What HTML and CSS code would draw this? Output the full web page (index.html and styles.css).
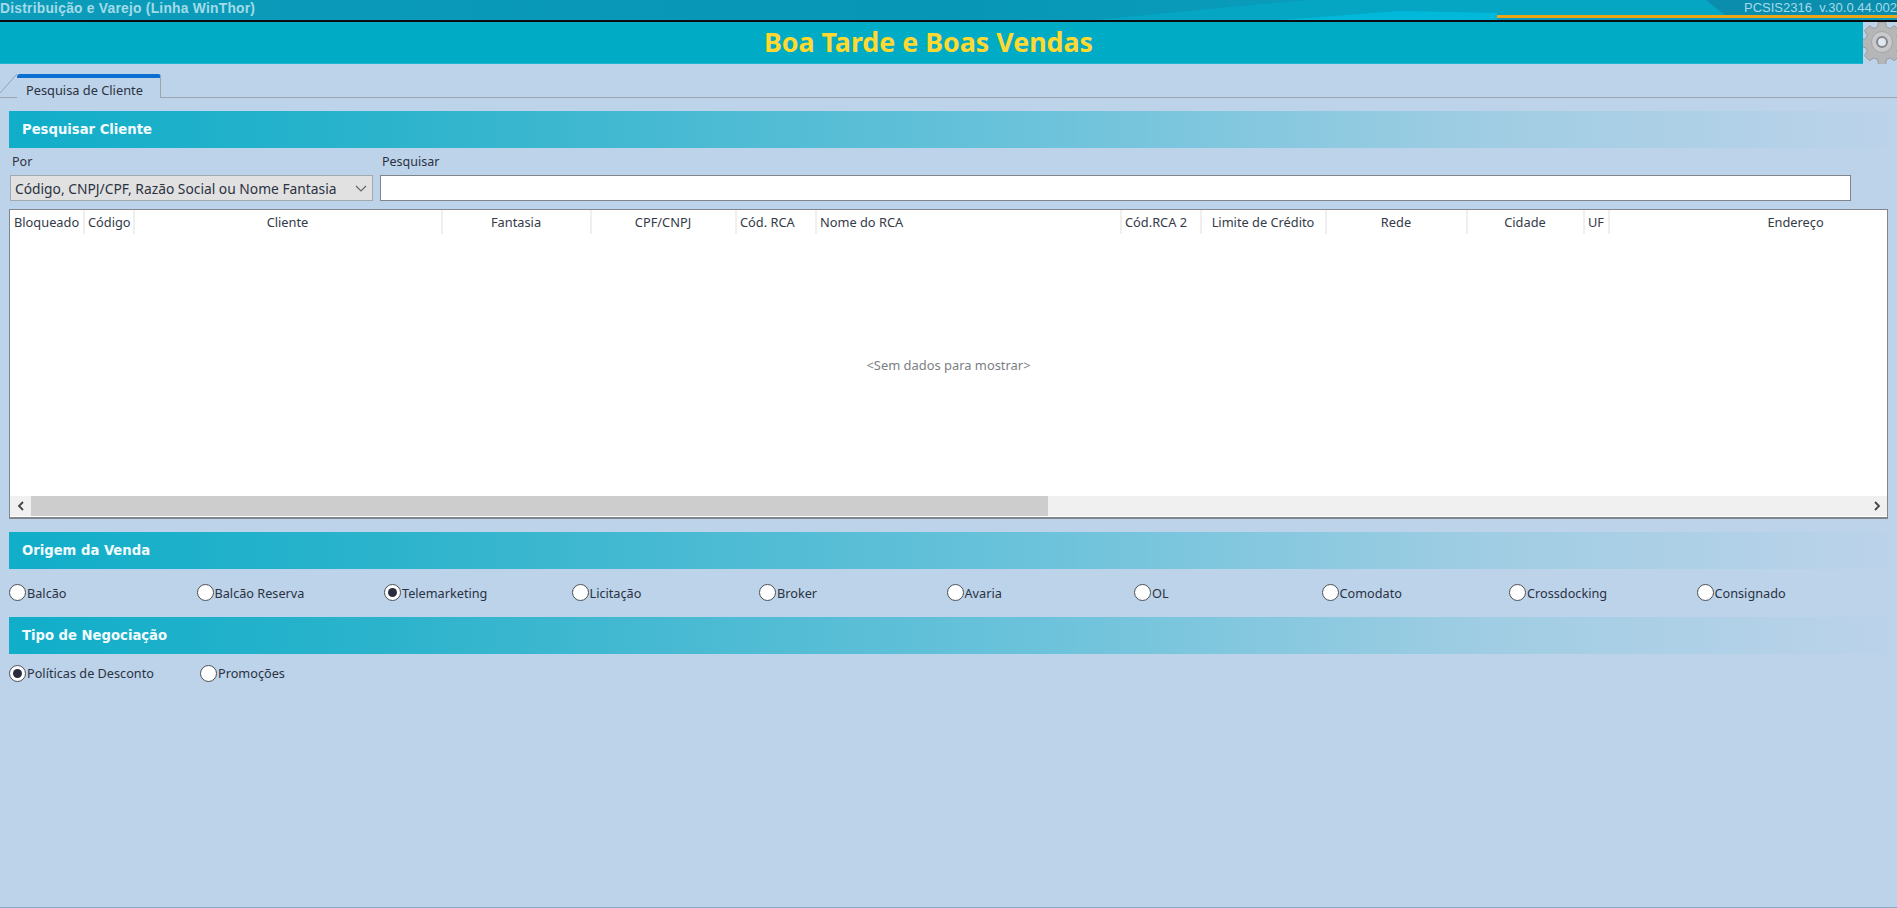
FILE: index.html
```html
<!DOCTYPE html>
<html lang="pt">
<head>
    <meta charset="UTF-8">
    <meta name="viewport" content="width=device-width, initial-scale=1.0">
    <title>PCSIS2316 - Pesquisa de Cliente</title>
    <link rel="stylesheet" href="styles.css">
</head>
<body>
    <header class="topbar">
        <svg class="topbar-art" viewBox="0 0 1897 20" preserveAspectRatio="none" aria-hidden="true">
            <polygon points="1095,20 1240,6 1310,0 1720,0 1760,15 1497,15 1497,20" fill="#04a6c4"/>
            <polygon points="1280,20 1400,11 1497,13 1497,20" fill="#00b9da"/>
            <polygon points="1706,0 1897,0 1897,15 1725,15" fill="#0b8dad"/>
            <rect x="1497" y="15" width="400" height="3" fill="#eca516"/>
        </svg>
        <span class="app-name">Distribuição e Varejo (Linha WinThor)</span>
        <span class="app-version">PCSIS2316&nbsp; v.30.0.44.002</span>
    </header>
    <div class="greeting">
        <h1>Boa Tarde e Boas Vendas</h1>
        <div class="gear">
            <svg width="40" height="42" viewBox="0 0 40 42" aria-hidden="true">
                <path d="M15.500 0h7l1 5 3.500 1.500 4.500-2.800 5 5-2.800 4.500 1.500 3.500 5 1v7l-5 1-1.500 3.500 2.800 4.500-5 5-4.500-2.800-3.500 1.500-1 5h-7l-1-5-3.500-1.500-4.500 2.800-5-5 2.800-4.500-1.500-3.500-5-1v-7l5-1 1.500-3.500-2.800-4.500 5-5 4.500 2.800 3.500-1.500z" fill="#b4b6b8" stroke="#9a9c9e" stroke-width="1"/>
                <circle cx="19" cy="20" r="10.500" fill="#c9cacb" stroke="#a3a5a7" stroke-width="1"/>
                <circle cx="19" cy="20" r="5" fill="#dfe8f2" stroke="#85878a" stroke-width="2"/>
            </svg>
        </div>
    </div>

    <nav class="tabs">
        <svg class="tab-slant" width="18" height="25" viewBox="0 0 18 25" aria-hidden="true">
            <path d="M0 20 L17 1" fill="none" stroke="#9aa3ad" stroke-width="1"/>
        </svg>
        <div class="tab">Pesquisa de Cliente</div>
    </nav>

    <main class="content">
        <h2 class="section-title">Pesquisar Cliente</h2>
        <div class="search-row">
            <div class="field field-by">
                <label>Por</label>
                <div class="combo">
                    <span>Código, CNPJ/CPF, Razão Social ou Nome Fantasia</span>
                    <svg width="12" height="7" viewBox="0 0 12 7" aria-hidden="true">
                        <path d="M1 1 L6 6 L11 1" fill="none" stroke="#666" stroke-width="1.200"/>
                    </svg>
                </div>
            </div>
            <div class="field field-query">
                <label>Pesquisar</label>
                <input type="text" class="query">
            </div>
        </div>

        <section class="grid">
            <div class="grid-head">
                <div class="col col-left">Bloqueado</div>
                <div class="col col-left">Código</div>
                <div class="col">Cliente</div>
                <div class="col">Fantasia</div>
                <div class="col">CPF/CNPJ</div>
                <div class="col col-left">Cód. RCA</div>
                <div class="col col-left">Nome do RCA</div>
                <div class="col col-left">Cód.RCA 2</div>
                <div class="col">Limite de Crédito</div>
                <div class="col">Rede</div>
                <div class="col">Cidade</div>
                <div class="col col-left">UF</div>
                <div class="col">Endereço</div>
            </div>
            <div class="grid-body">&lt;Sem dados para mostrar&gt;</div>
            <div class="hscroll">
                <div class="hscroll-btn">
                    <svg width="8" height="10" viewBox="0 0 8 10" aria-hidden="true"><path d="M6 1 L2 5 L6 9" fill="none" stroke="#444" stroke-width="1.800"/></svg>
                </div>
                <div class="hscroll-track"><div class="hscroll-thumb"></div></div>
                <div class="hscroll-btn">
                    <svg width="8" height="10" viewBox="0 0 8 10" aria-hidden="true"><path d="M2 1 L6 5 L2 9" fill="none" stroke="#444" stroke-width="1.800"/></svg>
                </div>
            </div>
        </section>

        <h2 class="section-title section-origin">Origem da Venda</h2>
        <div class="radios radios-origin">
            <div class="radio"><i></i>Balcão</div>
            <div class="radio"><i></i>Balcão Reserva</div>
            <div class="radio on"><i></i>Telemarketing</div>
            <div class="radio"><i></i>Licitação</div>
            <div class="radio"><i></i>Broker</div>
            <div class="radio"><i></i>Avaria</div>
            <div class="radio"><i></i>OL</div>
            <div class="radio"><i></i>Comodato</div>
            <div class="radio"><i></i>Crossdocking</div>
            <div class="radio"><i></i>Consignado</div>
        </div>

        <h2 class="section-title">Tipo de Negociação</h2>
        <div class="radios radios-deal">
            <div class="radio on"><i></i>Políticas de Desconto</div>
            <div class="radio"><i></i>Promoções</div>
        </div>
    </main>
</body>
</html>
```

FILE: styles.css
```css
html, body {
    height: 100%;
}
body {
    margin: 0;
    height: 908px;
    box-sizing: border-box;
    overflow: hidden;
    background: #bcd3ea;
    border-bottom: 1px solid #8fa8c8;
    font-family: "Noto Sans", Tahoma, sans-serif;
    font-size: 12.5px;
    color: #2b3242;
}

/* top strip */
.topbar {
    position: relative;
    height: 20px;
    display: flex;
    justify-content: space-between;
    align-items: center;
    overflow: hidden;
    white-space: nowrap;
    background: linear-gradient(90deg, #0c9cba 0%, #0796b6 50%, #0a9cbc 70%, #0b9cbc 100%);
    border-bottom: 2px solid #0c0c10;
    font-family: "Liberation Sans", Arial, sans-serif;
    color: #a3dbe8;
}
.topbar-art {
    position: absolute;
    left: 0;
    top: 0;
    width: 1897px;
    height: 20px;
}
.app-name {
    position: relative;
    font-weight: bold;
    font-size: 13.8px;
    letter-spacing: 0.25px;
    margin-top: -4px;
}
.app-version {
    position: relative;
    font-size: 13px;
    margin-top: -6px;
}

/* greeting */
.greeting {
    display: flex;
    height: 42px;
}
.greeting h1 {
    flex: 1;
    margin: 0;
    padding-right: 6px;
    background: #00abc6;
    border-bottom: 1px solid #20b5cf;
    text-align: center;
    font-size: 26.800px;
    line-height: 40px;
    font-weight: bold;
    color: #ffd92f;
}
.gear {
    width: 34px;
    overflow: hidden;
}

/* tabs */
.tabs {
    display: flex;
    align-items: flex-end;
    height: 34px;
    box-sizing: border-box;
    border-bottom: 1px solid #9ca4ae;
}
.tab-slant {
    display: block;
    margin-bottom: -1px;
    margin-right: -1px;
}
.tab {
    width: 144px;
    height: 24px;
    box-sizing: border-box;
    margin-bottom: -1px;
    padding: 4px 0 0 9px;
    border-top: 4px solid #0a6fd0;
    border-right: 1px solid #9ca4ae;
    border-radius: 3px 3px 0 0;
    background: #bcd3ea;
    font-size: 12.800px;
    line-height: 17px;
}

/* content */
.content {
    padding: 13px 0 0 9px;
}
.section-title {
    height: 37px;
    margin: 0;
    padding-left: 13px;
    background: linear-gradient(90deg, #10aec9 0%, #2cb3cc 20%, #6cc3db 55%, #9fcde3 78%, #bcd3ea 100%);
    font-family: "DejaVu Sans", Verdana, sans-serif;
    font-size: 13.2px;
    line-height: 38px;
    font-weight: bold;
    color: #f2fbfd;
}
.section-origin {
    margin-top: 13px;
}

.search-row {
    display: flex;
    gap: 7px;
    margin: 0 0 8px 1px;
}
.field label {
    display: block;
    height: 27px;
    line-height: 28px;
    padding-left: 2px;
}
.field-by {
    width: 363px;
}
.field-query {
    width: 1471px;
}
.combo {
    display: flex;
    justify-content: space-between;
    align-items: center;
    height: 26px;
    box-sizing: border-box;
    padding: 0 5px 0 4px;
    background: #e1e1e1;
    border: 1px solid #a3a9b0;
    font-size: 13.800px;
    white-space: nowrap;
}
.query {
    display: block;
    width: 100%;
    height: 26px;
    box-sizing: border-box;
    margin: 0;
    background: #fff;
    border: 1px solid #7f858b;
    border-radius: 0;
    outline: none;
}

/* result grid */
.grid {
    width: 1879px;
    height: 310px;
    box-sizing: border-box;
    display: flex;
    flex-direction: column;
    background: #fff;
    border: 1px solid #80868c;
    border-bottom-width: 2px;
}
.grid-head {
    display: grid;
    grid-template-columns: 74px 50px 308px 149px 145px 80px 305px 80px 125px 141px 117px 25px 374px;
    height: 24px;
    flex: none;
    padding-left: 1px;
    overflow: hidden;
    white-space: nowrap;
    font-size: 12.800px;
}
.col {
    box-sizing: border-box;
    padding: 0 4px 0 3px;
    border-right: 2px solid #efefef;
    text-align: center;
    line-height: 24px;
    color: #333a48;
}
.col-left {
    text-align: left;
}
.grid-body {
    flex: 1;
    display: flex;
    align-items: center;
    justify-content: center;
    font-size: 12.900px;
    color: #7b7f85;
}
.hscroll {
    display: flex;
    height: 20px;
    flex: none;
    background: #f0f0f0;
    border-bottom: 1px solid #fff;
}
.hscroll-btn {
    display: flex;
    align-items: center;
    justify-content: center;
    width: 21px;
    flex: none;
}
.hscroll-track {
    flex: 1;
}
.hscroll-thumb {
    width: 1017px;
    height: 100%;
    background: #cdcdcd;
}

/* radio rows */
.radios {
    display: grid;
    align-items: center;
    height: 47px;
    padding-bottom: 1px;
}
.radios-origin {
    grid-template-columns: repeat(10, 187.5px);
}
.radios-deal {
    grid-template-columns: 191px 120px;
    height: 38px;
}
.radio {
    display: flex;
    align-items: center;
    gap: 1px;
    font-size: 12.700px;
    white-space: nowrap;
}
.radio i {
    display: flex;
    align-items: center;
    justify-content: center;
    width: 17px;
    height: 17px;
    box-sizing: border-box;
    background: #fff;
    border: 1px solid #4c4f55;
    border-radius: 50%;
}
.radio.on i::after {
    content: "";
    width: 9px;
    height: 9px;
    border-radius: 50%;
    background: #2b2b40;
}
```
